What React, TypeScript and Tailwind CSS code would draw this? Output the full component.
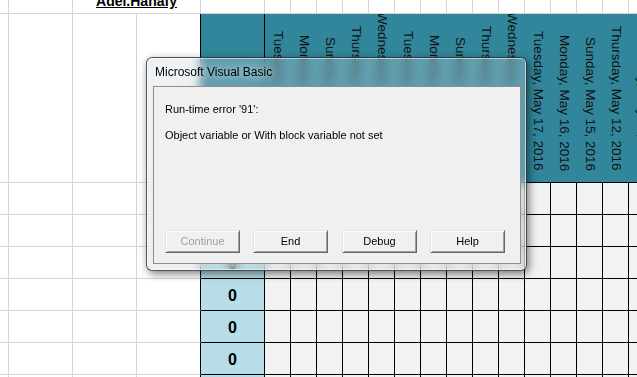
import React from 'react';

const DATES = [
  'Tuesday, May 31, 2016',
  'Monday, May 30, 2016',
  'Sunday, May 29, 2016',
  'Thursday, May 26, 2016',
  'Wednesday, May 25, 2016',
  'Tuesday, May 24, 2016',
  'Monday, May 23, 2016',
  'Sunday, May 22, 2016',
  'Thursday, May 19, 2016',
  'Wednesday, May 18, 2016',
  'Tuesday, May 17, 2016',
  'Monday, May 16, 2016',
  'Sunday, May 15, 2016',
  'Thursday, May 12, 2016',
  'Wednesday, May 11, 2016',
  'Tuesday, May 10, 2016',
];

const DATA_ROWS = 7;

// Top row: user name merged across two columns
function NameRow() {
  return (
    <div className="flex h-[14px] w-max">
      <div className="w-[9px] shrink-0 border-r border-b border-[#d4d4d4]" />
      <div className="w-[64px] shrink-0 border-r border-b border-[#d4d4d4]" />
      <div className="flex w-[128px] shrink-0 justify-center overflow-hidden border-r border-b border-[#d4d4d4]">
        <span className="-mt-[6px] text-[14px] leading-[14px] font-bold underline">Adel.Hanafy</span>
      </div>
      <div className="w-[64px] shrink-0 border-r border-b border-[#d4d4d4]" />
      {DATES.map((d) => (
        <div key={d} className="w-[26px] shrink-0 border-r border-b border-[#d4d4d4]" />
      ))}
    </div>
  );
}

// Teal header row with the dates turned on their side
function HeaderRow() {
  return (
    <div className="flex h-[169px] w-max">
      <div className="w-[9px] shrink-0 border-r border-b border-[#d4d4d4]" />
      <div className="w-[64px] shrink-0 border-r border-b border-[#d4d4d4]" />
      <div className="w-[64px] shrink-0 border-r border-b border-[#d4d4d4]" />
      <div className="w-[64px] shrink-0 border-r border-b border-[#d4d4d4] border-r-black" />
      <div className="w-[64px] shrink-0 border-r border-b border-black bg-[#31869b]" />
      {DATES.map((d) => (
        <div
          key={d}
          className="flex w-[26px] shrink-0 flex-col items-center justify-end overflow-hidden border-b border-black bg-[#31869b] pb-[11px]"
        >
          <span className="text-[13.5px] leading-[26px] whitespace-nowrap text-[#111] [writing-mode:vertical-rl]">
            {d}
          </span>
        </div>
      ))}
    </div>
  );
}

function DataRow() {
  return (
    <div className="flex h-[32px] w-max">
      <div className="w-[9px] shrink-0 border-r border-b border-[#d4d4d4]" />
      <div className="w-[64px] shrink-0 border-r border-b border-[#d4d4d4]" />
      <div className="w-[64px] shrink-0 border-r border-b border-[#d4d4d4]" />
      <div className="w-[64px] shrink-0 border-r border-b border-[#d4d4d4] border-r-black" />
      <div className="flex w-[64px] shrink-0 items-end justify-center border-r border-b border-black bg-[#b7dee8] pb-[5px]">
        <span className="text-[16px] leading-[18px] font-bold text-black">0</span>
      </div>
      {DATES.map((d) => (
        <div key={d} className="w-[26px] shrink-0 border-r border-b border-black bg-[#f2f2f2]" />
      ))}
    </div>
  );
}

function DialogButton({ label, disabled = false, className = '' }: { label: string; disabled?: boolean; className?: string }) {
  return (
    <div
      className={`flex h-[23px] w-[75px] items-center justify-center border border-t-[#e3e3e3] border-l-[#e3e3e3] border-r-[#696969] border-b-[#696969] bg-[#f0f0f0] text-[11px] shadow-[inset_1px_1px_0_#ffffff,inset_-1px_-1px_0_#a0a0a0] ${
        disabled ? 'text-[#a0a0a0]' : 'text-black'
      } ${className}`}
    >
      {label}
    </div>
  );
}

function ErrorDialog() {
  return (
    <div className="absolute top-[57px] left-[146px] flex h-[214px] w-[381px] flex-col rounded-[6px] border border-[rgba(30,30,30,0.75)] bg-[rgba(200,212,218,0.32)] pr-[5px] pb-[6px] pl-[6px] shadow-[2px_3px_8px_rgba(0,0,0,0.5),inset_0_0_0_1px_rgba(255,255,255,0.55)] backdrop-blur-[5px]">
      {/* Title bar */}
      <div className="h-[28px] shrink-0 pt-[7px] pl-[2px]">
        <div className="text-[12px] leading-[14px] text-black [text-shadow:0_0_8px_rgba(255,255,255,0.95)]">
          Microsoft Visual Basic
        </div>
      </div>

      {/* Client area */}
      <div className="flex flex-1 flex-col border border-[#8f8f8f] bg-[#f0f0f0] pt-[16px] pb-[10px] pl-[11px]">
        <div className="text-[11px] leading-[13px] text-black">Run-time error '91':</div>
        <div className="mt-[13px] text-[11px] leading-[13px] text-black">
          Object variable or With block variable not set
        </div>
        <div className="mt-auto flex gap-[13px]">
          <DialogButton label="Continue" disabled />
          <DialogButton label="End" />
          <DialogButton label="Debug" className="ml-[1px]" />
          <DialogButton label="Help" />
        </div>
      </div>
    </div>
  );
}

export default function App() {
  return (
    <div className="relative h-[377px] w-[637px] overflow-hidden bg-white font-['Liberation_Sans',Arial,sans-serif]">
      <div className="flex flex-col">
        <NameRow />
        <HeaderRow />
        {Array.from({ length: DATA_ROWS }).map((_, i) => (
          <DataRow key={i} />
        ))}
      </div>
      <ErrorDialog />
    </div>
  );
}
